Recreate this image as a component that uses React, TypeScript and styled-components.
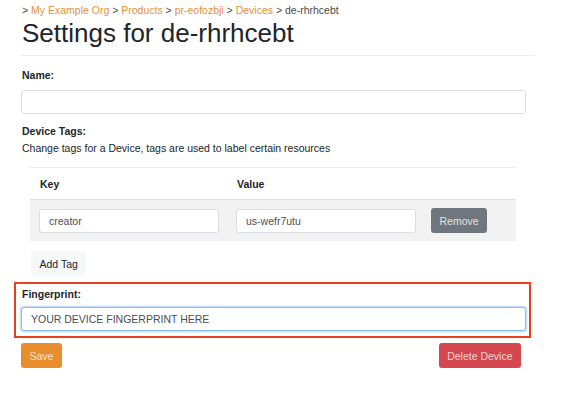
import React from "react";
import styled, { createGlobalStyle } from "styled-components";

const Global = createGlobalStyle`
  html, body { margin: 0; padding: 0; background: #fff; }
  body {
    font-family: "Liberation Sans", Arial, sans-serif;
    font-size: 10.5px;
    line-height: 16px;
    color: #212529;
  }
  * { box-sizing: border-box; }
`;

const Page = styled.div`
  padding: 2px 26px 0 21px;
  width: 561px;
`;

const Crumbs = styled.div`
  height: 16px;
  line-height: 16px;
  color: #4a4a4a;
  padding-left: 1px;
`;

const CrumbLink = styled.a`
  color: #e8913a;
  text-decoration: none;
`;

const Title = styled.h1`
  margin: 0;
  font-size: 26px;
  line-height: 31px;
  font-weight: 400;
  color: #212529;
  padding-left: 1px;
`;

const Rule = styled.hr`
  margin: 6px 0 11px;
  border: 0;
  border-top: 1px solid #ececec;
`;

const Form = styled.form`
  width: 505px;
`;

const Label = styled.label<{ $mb?: number }>`
  display: block;
  font-weight: 700;
  line-height: 16px;
  padding-left: 1px;
  margin-bottom: ${(p) => p.$mb ?? 7}px;
`;

const Input = styled.input<{ $focus?: boolean }>`
  display: block;
  width: 100%;
  height: 24px;
  padding: 0 9px;
  font-family: inherit;
  font-size: 10.5px;
  color: #495057;
  background: #fff;
  border: 1px solid ${(p) => (p.$focus ? "#86bbf7" : "#dadde1")};
  border-radius: 3px;
  outline: none;
  box-shadow: ${(p) => (p.$focus ? "0 0 0 1.5px rgba(0,123,255,0.2)" : "none")};
`;

const Group = styled.div`
  margin-bottom: 9px;
`;

const Help = styled.div`
  line-height: 16px;
  padding-left: 1px;
`;

const Table = styled.div`
  margin: 11px 10px 0 9px;
  border-top: 1px solid #ebebeb;
`;

const Row = styled.div<{ $head?: boolean }>`
  display: grid;
  grid-template-columns: 197px 197px 1fr;
  align-items: center;
  height: ${(p) => (p.$head ? 32 : 41)}px;
  background: ${(p) => (p.$head ? "#fff" : "#f2f2f2")};
  border-bottom: ${(p) => (p.$head ? "1px solid #dedede" : "0")};
`;

const Cell = styled.div<{ $last?: boolean }>`
  padding: 0 ${(p) => (p.$last ? 0 : 8)}px 0 ${(p) => (p.$last ? 7 : 9)}px;
`;

const HeadCell = styled(Cell)`
  font-weight: 700;
  padding-left: 10px;
`;

const Button = styled.button<{ $bg: string; $fg: string }>`
  height: 25px;
  padding: 0 8.5px;
  font-family: inherit;
  font-size: 10.5px;
  border: 0;
  border-radius: 3px;
  background: ${(p) => p.$bg};
  color: ${(p) => p.$fg};
`;

const AddRow = styled.div`
  padding: 10px 0 0 10px;
`;

const Highlight = styled.div`
  margin: 6px -5px 0 -7px;
  border: 2px solid #e8401f;
  padding: 2px 3px 5px 5px;
`;

const Actions = styled.div`
  display: flex;
  justify-content: space-between;
  padding: 5px 5px 0 0;
`;

export default function App() {
  return (
    <>
      <Global />
      <Page>
        <Crumbs>
          &gt; <CrumbLink>My Example Org</CrumbLink> &gt; <CrumbLink>Products</CrumbLink> &gt;{" "}
          <CrumbLink>pr-eofozbji</CrumbLink> &gt; <CrumbLink>Devices</CrumbLink> &gt; de-rhrhcebt
        </Crumbs>
        <Title>Settings for de-rhrhcebt</Title>
        <Rule />
        <Form>
          <Group>
            <Label>Name:</Label>
            <Input />
          </Group>
          <Label $mb={1}>Device Tags:</Label>
          <Help>Change tags for a Device, tags are used to label certain resources</Help>
          <Table>
            <Row $head>
              <HeadCell>Key</HeadCell>
              <HeadCell>Value</HeadCell>
              <HeadCell $last />
            </Row>
            <Row>
              <Cell>
                <Input defaultValue="creator" />
              </Cell>
              <Cell>
                <Input defaultValue="us-wefr7utu" />
              </Cell>
              <Cell $last>
                <Button type="button" $bg="#6f767d" $fg="#e2e4e6">
                  Remove
                </Button>
              </Cell>
            </Row>
          </Table>
          <AddRow>
            <Button type="button" $bg="#f6f7f8" $fg="#212529">
              Add Tag
            </Button>
          </AddRow>
          <Highlight>
            <Label $mb={5}>Fingerprint:</Label>
            <Input $focus defaultValue="YOUR DEVICE FINGERPRINT HERE" />
          </Highlight>
          <Actions>
            <Button type="button" $bg="#ea8d2c" $fg="#fbe3c8">
              Save
            </Button>
            <Button type="button" $bg="#d4474f" $fg="#f6d3d5">
              Delete Device
            </Button>
          </Actions>
        </Form>
      </Page>
    </>
  );
}
